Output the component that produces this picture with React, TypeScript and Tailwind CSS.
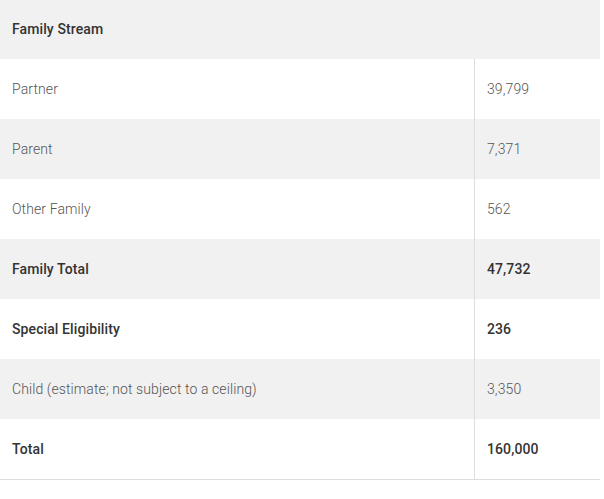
import React from "react";

const rows: { label: string; value: string; bold?: boolean }[] = [
  { label: "Partner", value: "39,799" },
  { label: "Parent", value: "7,371" },
  { label: "Other Family", value: "562" },
  { label: "Family Total", value: "47,732", bold: true },
  { label: "Special Eligibility", value: "236", bold: true },
  { label: "Child (estimate; not subject to a ceiling)", value: "3,350" },
  { label: "Total", value: "160,000", bold: true },
];

export default function App() {
  return (
    <div className="w-[604px] h-[499px] bg-white" style={{ fontFamily: "Roboto, sans-serif" }}>
      <div className="w-[600px] border-b border-[#dddddd]">
        <div className="h-[59px] bg-[#f1f1f1] flex items-center px-3 text-[14px] tracking-[0.1px] font-medium text-[#333]">
          Family Stream
        </div>
        {rows.map((r, i) => (
          <div
            key={r.label}
            className={
              "flex h-[60px] text-[14px] tracking-[0.1px] " +
              (i % 2 === 1 ? "bg-[#f1f1f1] " : "bg-white ") +
              (r.bold ? "font-medium text-[#333]" : "font-light text-[#555]")
            }
          >
            <div className="w-[474px] flex items-center px-3">{r.label}</div>
            <div className="flex-1 flex items-center pl-3 border-l border-[#dddddd]">{r.value}</div>
          </div>
        ))}
      </div>
    </div>
  );
}
